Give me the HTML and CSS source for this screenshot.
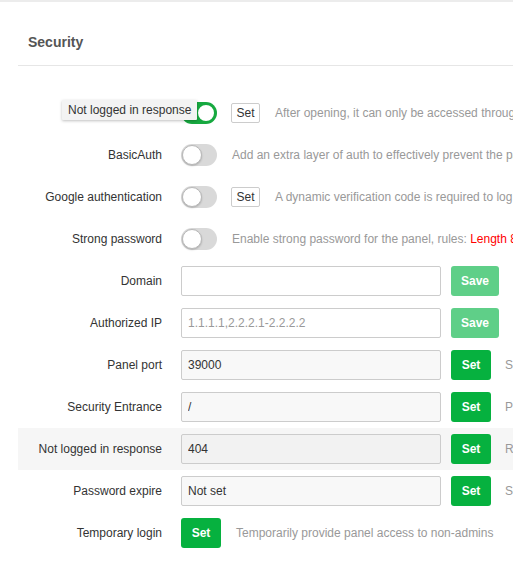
FILE: index.html
```html
<!DOCTYPE html>
<html>
<head>
<meta charset="utf-8">
<link rel="stylesheet" href="styles.css">
</head>
<body>
<div class="topbar"></div>
<div class="header"><span class="title">Security</span></div>
<div class="rows">
  <div class="row">
    <div class="label"></div>
    <span class="toggle on"><span class="knob"></span></span>
    <button class="btn-small">Set</button>
    <span class="desc wide">After opening, it can only be accessed through https protocol</span>
    <div class="tooltip">Not logged in response</div>
  </div>
  <div class="row">
    <div class="label">BasicAuth</div>
    <span class="toggle"><span class="knob"></span></span>
    <span class="desc">Add an extra layer of auth to effectively prevent the panel from being scanned</span>
  </div>
  <div class="row">
    <div class="label">Google authentication</div>
    <span class="toggle"><span class="knob"></span></span>
    <button class="btn-small">Set</button>
    <span class="desc wide">A dynamic verification code is required to log in to the panel</span>
  </div>
  <div class="row">
    <div class="label">Strong password</div>
    <span class="toggle"><span class="knob"></span></span>
    <span class="desc">Enable strong password for the panel, rules: <span class="red">Length 8 or more</span></span>
  </div>
  <div class="row">
    <div class="label">Domain</div>
    <input class="field" type="text" value="">
    <button class="btn save">Save</button>
    <span class="desc gbtn">Bind the panel domain</span>
  </div>
  <div class="row">
    <div class="label">Authorized IP</div>
    <input class="field" type="text" placeholder="1.1.1.1,2.2.2.1-2.2.2.2">
    <button class="btn save">Save</button>
    <span class="desc gbtn">Only allow the specified IP</span>
  </div>
  <div class="row">
    <div class="label">Panel port</div>
    <input class="field ro" type="text" value="39000" readonly>
    <button class="btn set">Set</button>
    <span class="desc gbtn">Suggested port range 8888 - 65535</span>
  </div>
  <div class="row">
    <div class="label">Security Entrance</div>
    <input class="field ro" type="text" value="/" readonly>
    <button class="btn set">Set</button>
    <span class="desc gbtn">Panel management entrance</span>
  </div>
  <div class="row hl">
    <div class="label">Not logged in response</div>
    <input class="field ro dark" type="text" value="404" readonly>
    <button class="btn set">Set</button>
    <span class="desc gbtn">Response when not logged in</span>
  </div>
  <div class="row">
    <div class="label">Password expire</div>
    <input class="field ro" type="text" value="Not set" readonly>
    <button class="btn set">Set</button>
    <span class="desc gbtn">Set password expiration</span>
  </div>
  <div class="row">
    <div class="label">Temporary login</div>
    <button class="btn set first">Set</button>
    <span class="desc temp">Temporarily provide panel access to non-admins</span>
  </div>
</div>
</body>
</html>
```

FILE: styles.css
```css
html, body {
  margin: 0;
  padding: 0;
  background: #fff;
  overflow: hidden;
}
body {
  width: 513px;
  font-family: "Liberation Sans", Arial, sans-serif;
  font-size: 12px;
  color: #333;
}
.topbar {
  height: 2px;
  background: #ececec;
}
.header {
  margin-left: 18px;
  padding: 30px 0 13px 10px;
  border-bottom: 1px solid #e6e6e6;
}
.title {
  display: block;
  font-size: 14px;
  font-weight: bold;
  line-height: 20px;
  color: #555;
}
.rows {
  padding-top: 26px;
}
.row {
  position: relative;
  height: 42px;
  margin-left: 18px;
  display: flex;
  align-items: center;
  white-space: nowrap;
}
.row.hl {
  background: #f6f6f6;
}
.label {
  flex: 0 0 auto;
  width: 144px;
  text-align: right;
  margin-right: 19px;
  color: #333;
  font-size: 12px;
}
.toggle {
  flex: 0 0 auto;
  position: relative;
  width: 36px;
  height: 22px;
  border-radius: 11px;
  background: #d9d9d9;
  box-sizing: border-box;
}
.toggle .knob {
  position: absolute;
  top: 1px;
  left: 1px;
  width: 20px;
  height: 20px;
  border-radius: 50%;
  background: #fff;
  box-sizing: border-box;
  border: 1px solid #b8b8b8;
  box-shadow: 0 1px 2px rgba(0,0,0,0.2);
}
.toggle.on {
  background: #17a940;
}
.toggle.on .knob {
  left: 15px;
  border-color: #17a940;
  box-shadow: none;
  border-width: 2px;
}
.btn-small {
  flex: 0 0 auto;
  margin-left: 14px;
  width: 29px;
  height: 20px;
  padding: 0;
  border: 1px solid #ccc;
  border-radius: 2px;
  background: #fff;
  font-family: inherit;
  font-size: 12px;
  color: #333;
}
.desc {
  margin-left: 15px;
  color: #999;
  font-size: 12px;
}
.desc.gbtn {
  margin-left: 14px;
}
.desc.temp {
  margin-left: 15px;
}
.red {
  color: #f00;
}
.field {
  flex: 0 0 auto;
  width: 260px;
  height: 30px;
  box-sizing: border-box;
  border: 1px solid #ccc;
  border-radius: 2px;
  padding: 0 6px;
  font-family: inherit;
  font-size: 12px;
  color: #333;
  background: #fff;
  outline: none;
}
.field::placeholder {
  color: #999;
}
.field.ro {
  background: #f8f8f8;
}
.field.ro.dark {
  background: #f2f2f2;
}
.btn {
  flex: 0 0 auto;
  margin-left: 10px;
  height: 30px;
  padding: 0;
  border: none;
  border-radius: 3px;
  font-family: inherit;
  font-size: 12px;
  font-weight: bold;
  color: #fff;
}
.btn.save {
  width: 48px;
  background: #5fcf88;
}
.btn.set {
  width: 40px;
  background: #06b13f;
}
.btn.first {
  margin-left: 0;
}
.tooltip {
  position: absolute;
  left: 44px;
  top: 8px;
  height: 20px;
  line-height: 20px;
  padding: 0 6px;
  width: 123px;
  background: #f3f3f3;
  color: #333;
  font-size: 12px;
  box-shadow: 0 1px 3px rgba(0,0,0,0.25);
  border-radius: 1px;
}
```
